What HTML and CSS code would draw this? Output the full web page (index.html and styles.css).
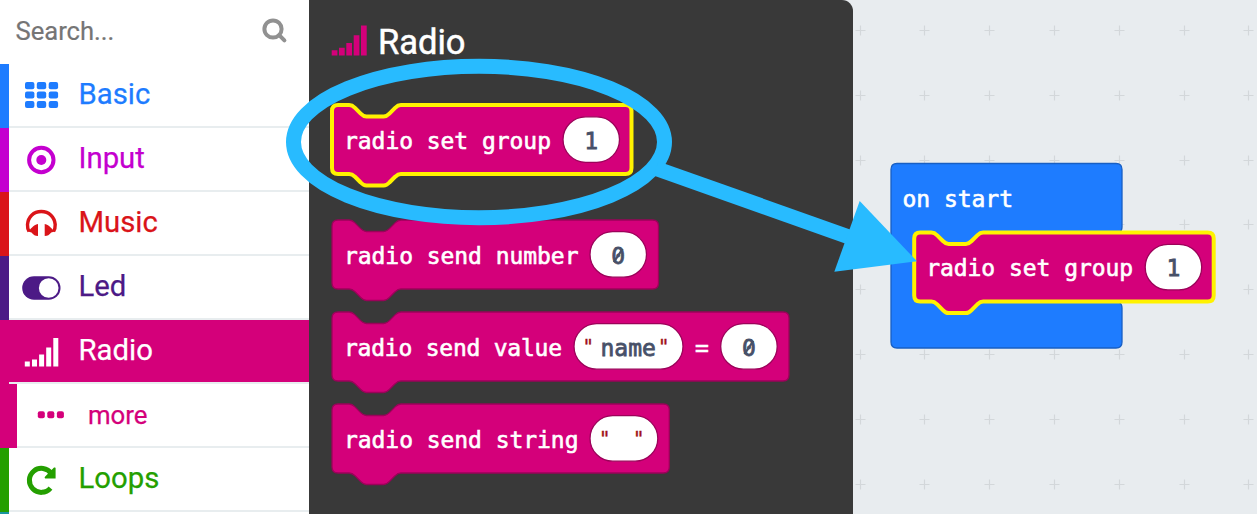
FILE: index.html
```html
<!DOCTYPE html>
<html lang="en">
<head>
<meta charset="utf-8">
<title>Blocks editor</title>
<link rel="stylesheet" href="styles.css">
</head>
<body>
<div class="editor">
  <nav class="toolbox">
    <div class="search"><span class="search-text">Search...</span>
      <svg class="search-icon" width="26" height="26" viewBox="0 0 26 26"><circle cx="11" cy="11" r="8.6"/><path d="M17.2 17.2L22.4 22.4"/></svg>
    </div>
    <div class="row basic"><svg class="icon" viewBox="0 0 40 40"><g fill="currentColor"><rect x="4" y="8" width="9.4" height="7.2" rx="2"/><rect x="15.8" y="8" width="9.4" height="7.2" rx="2"/><rect x="27.7" y="8" width="9.4" height="7.2" rx="2"/><rect x="4" y="17.4" width="9.4" height="7.2" rx="2"/><rect x="15.8" y="17.4" width="9.4" height="7.2" rx="2"/><rect x="27.7" y="17.4" width="9.4" height="7.2" rx="2"/><rect x="4" y="26.9" width="9.4" height="7.2" rx="2"/><rect x="15.8" y="26.9" width="9.4" height="7.2" rx="2"/><rect x="27.7" y="26.9" width="9.4" height="7.2" rx="2"/></g></svg><span>Basic</span></div>
    <div class="row input"><svg class="icon" viewBox="0 0 40 40"><circle cx="20.3" cy="22" r="12.2" fill="none" stroke="currentColor" stroke-width="4"/><circle cx="20.3" cy="22" r="5" fill="currentColor"/></svg><span>Input</span></div>
    <div class="row music"><svg class="icon" viewBox="0 0 40 40"><path d="M8 29.5C6.8 27.5 6.4 25.500 6.500 22.500C7 15 12.500 9.500 20.300 9.500S33.600 15 34.200 22.500C34.300 25.500 33.800 27.500 32.600 29.500" fill="none" stroke="currentColor" stroke-width="3.4"/><path d="M17 22V34C14 34 12.500 33 10.500 30.500L7 29.500C9.500 28 12 22.500 17 22ZM23.700 22V34C26.700 34 28.200 33 30.200 30.500L33.700 29.500C31.200 28 28.700 22.500 23.700 22Z" fill="currentColor"/></svg><span>Music</span></div>
    <div class="row led"><svg class="icon" viewBox="0 0 40 40"><rect x="1.200" y="10.200" width="38.300" height="23.600" rx="11.800" fill="currentColor"/><circle cx="27.700" cy="22" r="9.800" fill="#fff"/></svg><span>Led</span></div>
    <div class="row radio"><svg class="icon" viewBox="0 0 40 40"><path fill="currentColor" d="M3.800 33.500h5v5h-5zM11 31.500h5v7h-5zM18.100 26.600h5v11.900h-5zM25.200 19.400h5v19.100h-5zM32.300 9.900h5v28.600h-5z"/></svg><span>Radio</span></div>
    <div class="row more"><svg class="dots" width="28" height="10" viewBox="0 0 28 10"><g fill="currentColor"><rect x=".8" y="1.200" width="7" height="7" rx="2"/><rect x="10.300" y="1.200" width="7" height="7" rx="2"/><rect x="19.900" y="1.200" width="7" height="7" rx="2"/></g></svg><span>more</span></div>
    <div class="row loops"><svg class="icon" viewBox="0 0 40 40"><path d="M29.500 30.200A12 12 0 1 1 30.300 15.600" fill="none" stroke="currentColor" stroke-width="5"/><path d="M34.600 10V20.500H24.200C23.500 19.700 23.500 19.200 24.200 18.500L32.500 10C33.200 9.400 34 9.400 34.600 10Z" fill="currentColor"/></svg><span>Loops</span></div>
    <div class="row next"></div>
  </nav>
  <section class="flyout">
    <h1 class="flyout-title"><svg width="38" height="34" viewBox="0 0 38 34"><path fill="#d4007a" d="M.7 26.200h5.700v5.200H.7zM8 23.700h5.700v7.700H8zM15.300 19h5.700v12.400h-5.700zM22.700 11.200h5.700v20.200h-5.700zM30 1.400h5.700v30H30z"/></svg><span>Radio</span></h1>
    <svg class="block first" width="480" height="92" viewBox="-4 -4 480 92">
      <path class="shape selected" d="M0 6Q0 0 6 0H17.200C20 0 21.500 1.400 23 2.900L28.700 8.600C30.100 10 31.600 11.500 34.400 11.500H51.700C54.500 11.500 56 10 57.400 8.600L63.100 2.900C64.600 1.400 66 0 68.900 0H293.500Q299.500 0 299.500 6V63Q299.500 69 293.500 69H68.900C66 69 64.600 70.400 63.100 71.800L57.400 77.500C56 79 54.500 80.500 51.700 80.500H34.400C31.600 80.500 30.100 79 28.700 77.500L23 71.800C21.500 70.400 20 69 17.200 69H6Q0 69 0 63Z"/>
      <text class="code" x="12" y="43.700" textLength="207">radio set group</text>
      <rect class="field" x="231" y="11.800" width="56.500" height="45.500" rx="22.700"/><text class="value" x="252.300" y="43.700">1</text>
    </svg>
    <svg class="block" width="480" height="92" viewBox="-4 -4 480 92">
      <path class="shape" d="M0 6Q0 0 6 0H17.200C20 0 21.500 1.400 23 2.900L28.700 8.600C30.100 10 31.600 11.500 34.400 11.500H51.700C54.500 11.500 56 10 57.400 8.600L63.100 2.900C64.600 1.400 66 0 68.900 0H320.500Q326.500 0 326.500 6V63Q326.500 69 320.500 69H68.900C66 69 64.600 70.400 63.100 71.800L57.400 77.500C56 79 54.500 80.500 51.700 80.500H34.400C31.600 80.500 30.100 79 28.700 77.500L23 71.800C21.500 70.400 20 69 17.200 69H6Q0 69 0 63Z"/>
      <text class="code" x="12" y="44" textLength="234.500">radio send number</text>
      <rect class="field" x="258" y="11.700" width="56.500" height="45.500" rx="22.700"/><text class="value" x="279.300" y="44">0</text><path class="slash" d="M281.800 42.200L290.600 28.800"/>
    </svg>
    <svg class="block" width="480" height="92" viewBox="-4 -4 480 92">
      <path class="shape" d="M0 6Q0 0 6 0H17.200C20 0 21.500 1.400 23 2.900L28.700 8.600C30.100 10 31.600 11.500 34.400 11.500H51.700C54.500 11.500 56 10 57.400 8.600L63.100 2.900C64.600 1.400 66 0 68.900 0H451Q457 0 457 6V63Q457 69 451 69H68.900C66 69 64.600 70.400 63.100 71.800L57.400 77.500C56 79 54.500 80.500 51.700 80.500H34.400C31.600 80.500 30.100 79 28.700 77.500L23 71.800C21.500 70.400 20 69 17.200 69H6Q0 69 0 63Z"/>
      <text class="code" x="12" y="44" textLength="218">radio send value</text>
      <rect class="field" x="242" y="11.700" width="109" height="45.500" rx="22.700"/><text class="quote" x="250.500" y="41">"</text><text class="value" x="268.500" y="44">name</text><text class="quote" x="326" y="41">"</text>
      <text class="code" x="363" y="44">=</text>
      <rect class="field" x="388.700" y="11.700" width="56.500" height="45.500" rx="22.700"/><text class="value" x="410" y="44">0</text><path class="slash" d="M412.500 42.200L421.300 28.800"/>
    </svg>
    <svg class="block" width="480" height="92" viewBox="-4 -4 480 92">
      <path class="shape" d="M0 6Q0 0 6 0H17.200C20 0 21.500 1.400 23 2.900L28.700 8.600C30.100 10 31.600 11.500 34.400 11.500H51.700C54.500 11.500 56 10 57.400 8.600L63.100 2.900C64.600 1.400 66 0 68.900 0H331.300Q337.300 0 337.300 6V63Q337.300 69 331.300 69H68.900C66 69 64.600 70.400 63.100 71.800L57.400 77.500C56 79 54.500 80.500 51.700 80.500H34.400C31.600 80.500 30.100 79 28.700 77.500L23 71.800C21.500 70.400 20 69 17.200 69H6Q0 69 0 63Z"/>
      <text class="code" x="12" y="44" textLength="234.500">radio send string</text>
      <rect class="field" x="258" y="11.700" width="67.800" height="45.500" rx="22.700"/><text class="quote" x="267" y="41">"</text><text class="quote" x="301" y="41">"</text>
    </svg>
  </section>
  <main class="workspace">
    <svg class="canvas" width="404" height="514" viewBox="853 0 404 514">
      <path class="start" d="M897 163.500H1116Q1122 163.500 1122 169.500V227Q1122 231 1119 233V302Q1122 304 1122 308V342Q1122 348 1116 348H897Q891 348 891 342V169.500Q891 163.500 897 163.500Z"/>
      <text class="code" x="902.500" y="207" textLength="110.500">on start</text>
      <g transform="translate(914.200 232.400)">
        <path class="shape selected" d="M0 6Q0 0 6 0H17.200C20 0 21.500 1.400 23 2.900L28.700 8.600C30.100 10 31.600 11.500 34.400 11.500H51.700C54.500 11.500 56 10 57.400 8.600L63.100 2.900C64.600 1.400 66 0 68.900 0H293.500Q299.500 0 299.500 6V63.200Q299.500 69.200 293.500 69.200H68.900C66 69.200 64.600 70.600 63.100 72L57.400 77.700C56 79.200 54.500 80.700 51.700 80.700H34.400C31.600 80.700 30.100 79.200 28.700 77.700L23 72C21.500 70.600 20 69.200 17.200 69.200H6Q0 69.200 0 63.200Z"/>
        <text class="code" x="12" y="43.600" textLength="207">radio set group</text>
        <rect class="field" x="231" y="12" width="56.500" height="45.500" rx="22.700"/><text class="value" x="252.300" y="43.600">1</text>
      </g>
    </svg>
  </main>
  <svg class="annotation" width="1257" height="514" viewBox="0 0 1257 514"><ellipse cx="479" cy="142" rx="185.500" ry="75.700"/><path d="M656 168.500L849 237"/><path class="head" d="M859.700 201L917 261.300L834.300 271.700Z"/></svg>
</div>
</body>
</html>
```
FILE: styles.css
```css
body { margin: 0; font-family: Roboto, sans-serif; }
.editor {
  position: relative;
  display: flex;
  width: 1257px;
  height: 514px;
  overflow: hidden;
  background-color: #e8ecef;
  background-image: url("data:image/svg+xml,%3Csvg xmlns='http://www.w3.org/2000/svg' width='64.8' height='64.8'%3E%3Cpath d='M27.4 32.4h10M32.4 27.4v10' stroke='%23d3d7da' stroke-width='1.2'/%3E%3C/svg%3E");
  background-size: 64.8px 64.8px;
  background-position: 827.7px -1.9px;
}
.toolbox { width: 309px; flex: none; background: #fff; }
.search {
  display: flex;
  justify-content: space-between;
  height: 64px;
  padding: 0 21px 0 15.500px;
  box-sizing: border-box;
}
.search-text { font-size: 25.600px; line-height: 62px; color: #757575; -webkit-text-stroke: .2px; }
.search-icon { margin-top: 17.500px; fill: none; stroke: #919191; stroke-width: 4; stroke-linecap: round; }
.row {
  --c: #1e7cff;
  display: flex;
  align-items: flex-start;
  height: 64px;
  box-sizing: border-box;
  padding-left: 12px;
  border-left: 9px solid var(--c);
  color: var(--c);
  font-size: 29.300px;
  line-height: 60px;
  background: linear-gradient(#e8edef, #e8edef) left bottom / 100% 2px no-repeat;
}
.row span { margin-left: 17.500px; -webkit-text-stroke: .25px; }
.icon { width: 40px; height: 40px; margin-top: 10px; }
.input { --c: #c400cf; }
.music { --c: #da1419; }
.led { --c: #4c1a86; }
.radio { --c: #d4007a; color: #fff; background-color: var(--c); }
.radio .icon { margin-top: 8px; }
.more { --c: #d4007a; border-left-width: 17px; padding-left: 20px; font-size: 25.800px; line-height: 62px; }
.more span { margin-left: 23px; }
.dots { margin-top: 26px; }
.loops { --c: #249f00; }
.next { --c: #1b95a0; }
.flyout {
  width: 544px;
  flex: none;
  box-sizing: border-box;
  height: 514px;
  padding: 0 0 0 19px;
  background: #393939;
  border-top-right-radius: 11px;
  overflow: hidden;
}
.flyout-title {
  display: flex;
  height: 101px;
  box-sizing: border-box;
  margin: 0;
  padding: 24px 0 0 3px;
  font-size: 34.500px;
  line-height: 36px;
  font-weight: 400;
  color: #fff;
}
.flyout-title span { margin-left: 9px; -webkit-text-stroke: .5px #fff; }
.block { display: block; }
.first { margin-bottom: 23px; }
.shape { fill: #d4007a; stroke: #9b0259; stroke-width: 1.300; }
.selected { stroke: #fff200; stroke-width: 4; }
.field { fill: #fff; stroke: #9b0259; stroke-width: 1.300; }
.start { fill: #1e7cff; stroke: #185fc4; stroke-width: 1.300; }
.code, .value, .quote { font-family: "DejaVu Sans Mono", monospace; font-size: 23px; }
.code { fill: #fff; stroke: #fff; stroke-width: .6; }
.value { fill: #475068; stroke: #475068; stroke-width: .8; }
.slash { fill: none; stroke: #475068; stroke-width: 2.200; }
.quote { fill: #a01018; stroke: #a01018; stroke-width: .4; font-size: 19px; }
.workspace { flex: 1; }
.canvas { display: block; }
.annotation { position: absolute; left: 0; top: 0; fill: none; stroke: #28bbff; stroke-width: 15; }
.annotation .head { fill: #28bbff; stroke: none; }
```
